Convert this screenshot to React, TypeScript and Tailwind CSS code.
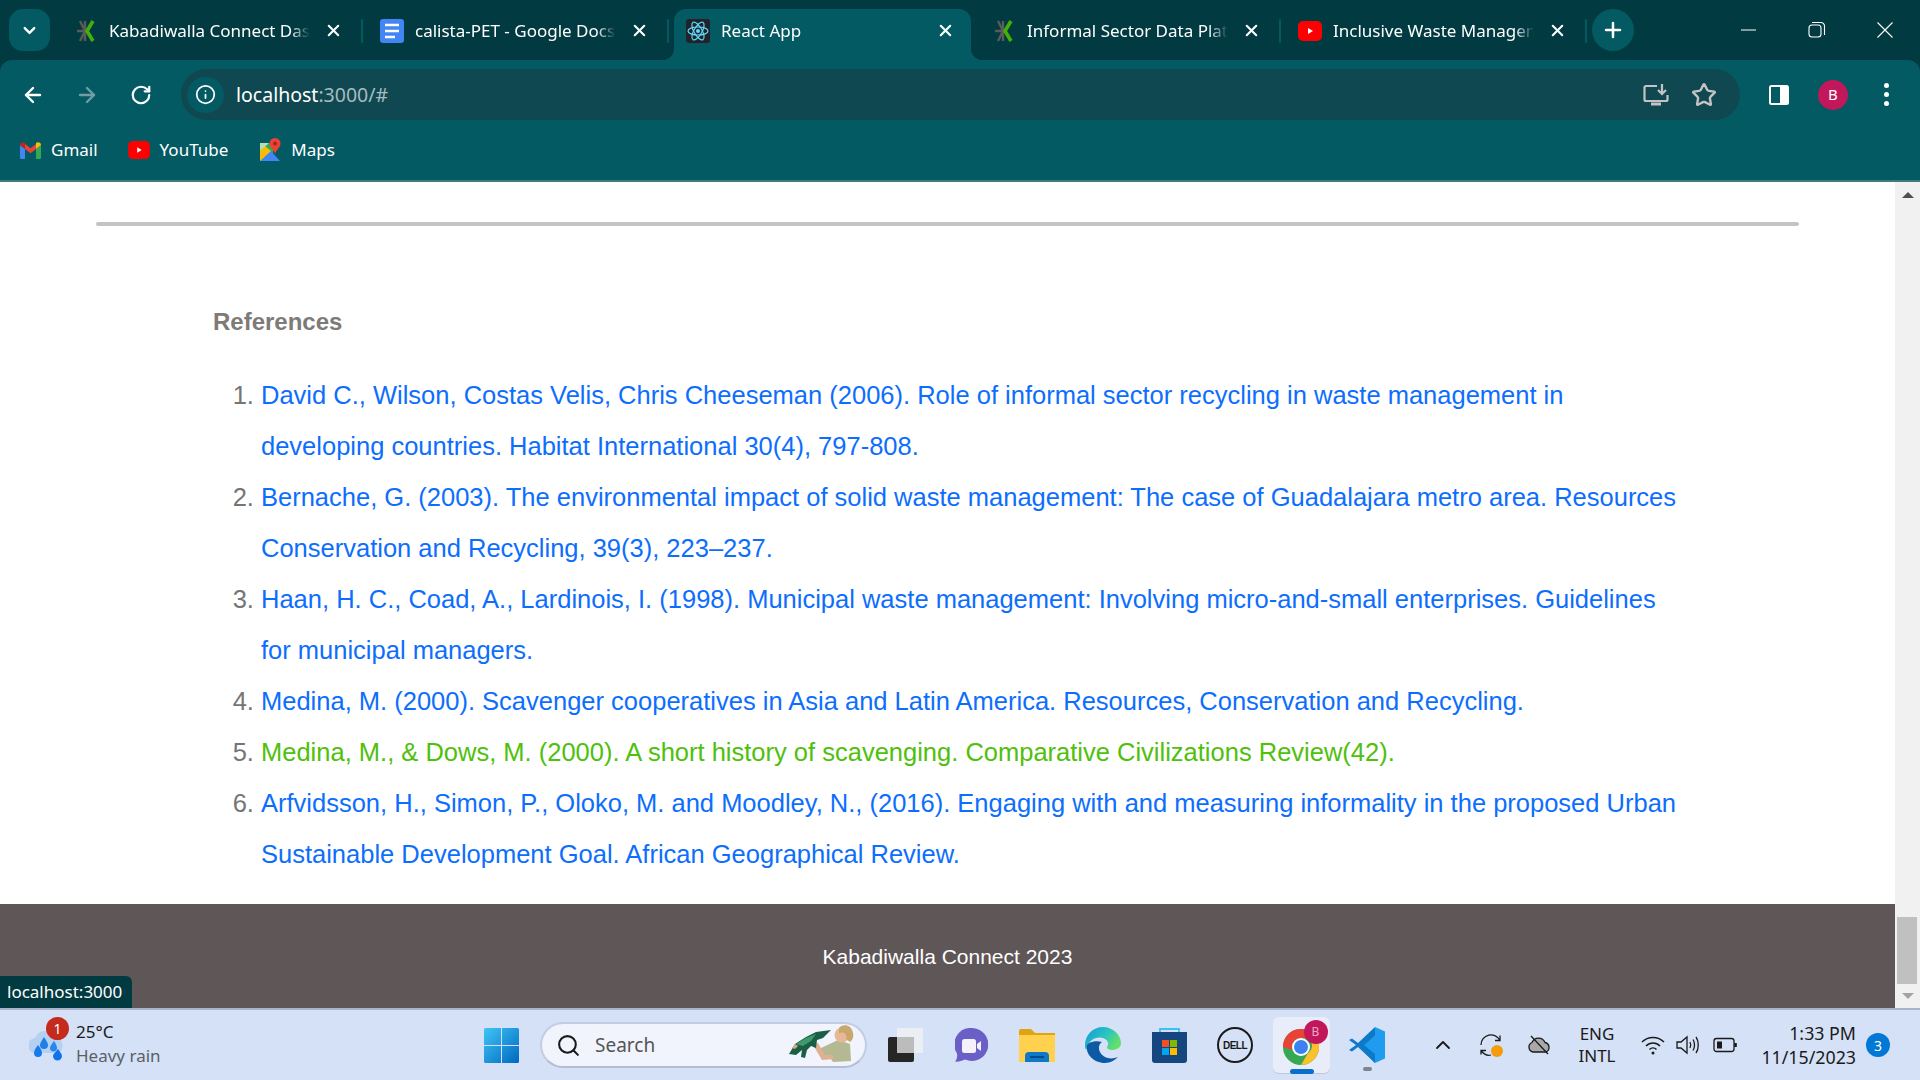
import React from "react";
import {
  ArrowLeft,
  ArrowRight,
  ChevronDown,
  ChevronUp,
  Info,
  Plus,
  RotateCw,
  Search,
  Star,
  X,
} from "lucide-react";

const references = [
  {
    text: "David C., Wilson, Costas Velis, Chris Cheeseman (2006). Role of informal sector recycling in waste management in developing countries. Habitat International 30(4), 797-808.",
    color: "text-[#0d6efd]",
  },
  {
    text: "Bernache, G. (2003). The environmental impact of solid waste management: The case of Guadalajara metro area. Resources Conservation and Recycling, 39(3), 223–237.",
    color: "text-[#0d6efd]",
  },
  {
    text: "Haan, H. C., Coad, A., Lardinois, I. (1998). Municipal waste management: Involving micro-and-small enterprises. Guidelines for municipal managers.",
    color: "text-[#0d6efd]",
  },
  {
    text: "Medina, M. (2000). Scavenger cooperatives in Asia and Latin America. Resources, Conservation and Recycling.",
    color: "text-[#0d6efd]",
  },
  {
    text: "Medina, M., & Dows, M. (2000). A short history of scavenging. Comparative Civilizations Review(42).",
    color: "text-[#4fc00c]",
  },
  {
    text: "Arfvidsson, H., Simon, P., Oloko, M. and Moodley, N., (2016). Engaging with and measuring informality in the proposed Urban Sustainable Development Goal. African Geographical Review.",
    color: "text-[#0d6efd]",
  },
];

function KabadiLogo() {
  return (
    <svg width="20" height="22" viewBox="0 0 20 22">
      <path d="M4 1l5 10-5 10M9 1v20M1 11h7" stroke="#5a5a5a" strokeWidth="2.4" fill="none" />
      <path d="M17 1l-6 10 6 10" stroke="#43b00a" strokeWidth="3.6" fill="none" />
    </svg>
  );
}

function DocsIcon() {
  return (
    <svg width="24" height="24" viewBox="0 0 24 24">
      <rect width="24" height="24" rx="3" fill="#4285f4" />
      <path d="M5 6h14M5 12h14M5 18h10" stroke="#fff" strokeWidth="2.6" />
    </svg>
  );
}

function ReactIcon() {
  return (
    <svg width="24" height="24" viewBox="0 0 24 24">
      <rect width="24" height="24" rx="3" fill="#20232a" />
      <g fill="none" stroke="#61dafb" strokeWidth="1.2">
        <ellipse cx="12" cy="12" rx="10" ry="4" />
        <ellipse cx="12" cy="12" rx="10" ry="4" transform="rotate(60 12 12)" />
        <ellipse cx="12" cy="12" rx="10" ry="4" transform="rotate(120 12 12)" />
      </g>
      <circle cx="12" cy="12" r="2" fill="#61dafb" />
    </svg>
  );
}

function YouTubeIcon({ w = 24, h = 20 }: { w?: number; h?: number }) {
  return (
    <svg width={w} height={h} viewBox="0 0 24 20">
      <rect width="24" height="20" y="0" rx="5" fill="#f00" />
      <path d="M10 7l5 3-5 3z" fill="#fff" />
    </svg>
  );
}

function GmailIcon() {
  return (
    <svg width="21" height="17" viewBox="0 0 21 17">
      <path d="M0 3v12.500a1.500 1.500 0 0 0 1.500 1.500H5V7z" fill="#4285f4" />
      <path d="M16 7v10h3.500a1.500 1.500 0 0 0 1.500-1.500V3z" fill="#34a853" />
      <path d="M5 7v-5l5.500 4.200L16 2v5l-5.500 4.200z" fill="#ea4335" />
      <path d="M0 3c0-2.500 3-3.500 5-2v6z" fill="#c5221f" />
      <path d="M21 3c0-2.500-3-3.500-5-2v6z" fill="#fbbc04" />
    </svg>
  );
}

function MapsIcon() {
  return (
    <svg width="22" height="24" viewBox="0 0 22 24">
      <path d="M1 5h13v18H1z" fill="#34a853" />
      <path d="M1 23l10-11 10 11z" fill="#4285f4" />
      <path d="M1 23V13l5-5 6 5z" fill="#fbbc04" />
      <path d="M1 5h9L1 13z" fill="#b9dcb7" />
      <path d="M16 0a5.500 5.500 0 0 1 5.500 5.500C21.500 9.500 17 12 16 16c-1-4-5.500-6.500-5.500-10.500A5.500 5.500 0 0 1 16 0z" fill="#ea4335" />
      <circle cx="16" cy="5.500" r="2" fill="#a52714" />
    </svg>
  );
}

function Tab({
  icon,
  title,
  active,
  last,
}: {
  icon: React.ReactNode;
  title: string;
  active?: boolean;
  last?: boolean;
}) {
  return (
    <div className="relative flex h-[51px] w-[306px] shrink-0 items-center pb-[8px]">
      {active && (
        <div className="absolute bottom-0 left-[5px] right-[4px] top-0 rounded-t-xl bg-[#035a62]">
          <div className="absolute bottom-0 left-[-12px] h-3 w-3 bg-[radial-gradient(circle_at_0_0,#023a42_12px,#035a62_12.500px)]" />
          <div className="absolute bottom-0 right-[-12px] h-3 w-3 bg-[radial-gradient(circle_at_100%_0,#023a42_12px,#035a62_12.500px)]" />
        </div>
      )}
      <div className="relative ml-[17px] flex h-6 w-6 items-center justify-center">{icon}</div>
      <span className="relative ml-[11px] w-[201px] overflow-hidden whitespace-nowrap text-[17px] leading-6 text-white [mask-image:linear-gradient(to_right,black_90%,transparent)]">
        {title}
      </span>
      <X className="relative ml-[14px] text-white" size={19} strokeWidth={2.6} />
      {!last && !active && <div className="absolute right-0 top-[10px] h-6 w-[2px] rounded bg-[#035a62]" />}
    </div>
  );
}

function TabStrip() {
  return (
    <div className="flex h-[60px] items-start bg-[#023a42] pl-[9px] pt-[9px]">
      <div className="flex h-[42px] w-[41px] shrink-0 items-center justify-center rounded-[14px] bg-[#035a62]">
        <ChevronDown className="text-white" size={19} strokeWidth={3} />
      </div>
      <div className="ml-[7px] flex">
        <Tab icon={<KabadiLogo />} title="Kabadiwalla Connect Dashboard" />
        <Tab icon={<DocsIcon />} title="calista-PET - Google Docs" />
        <Tab icon={<ReactIcon />} title="React App" active />
        <Tab icon={<KabadiLogo />} title="Informal Sector Data Platform" />
        <Tab icon={<YouTubeIcon />} title="Inclusive Waste Management" />
      </div>
      <div className="ml-[5px] flex h-[42px] w-[42px] shrink-0 items-center justify-center rounded-full bg-[#035a62]">
        <Plus className="text-white" size={24} strokeWidth={2.5} />
      </div>
      <div className="ml-[104px] flex h-[42px] items-center gap-[46px]">
        <svg width="22" height="22" viewBox="0 0 22 22">
          <path d="M3 11h15" stroke="#fff" strokeWidth="1" />
        </svg>
        <svg width="22" height="22" viewBox="0 0 22 22">
          <rect x="3" y="6" width="12" height="12" rx="3" fill="none" stroke="#fff" strokeWidth="1.1" />
          <path d="M6 3.500h9a3.500 3.500 0 0 1 3.500 3.500v9" fill="none" stroke="#fff" strokeWidth="1.1" />
        </svg>
        <svg width="22" height="22" viewBox="0 0 22 22">
          <path d="M3.500 3.500l15 15M18.500 3.500l-15 15" stroke="#fff" strokeWidth="1.1" />
        </svg>
      </div>
    </div>
  );
}

function Toolbar() {
  return (
    <div className="h-[120px] rounded-t-xl bg-[#035a62]">
      <div className="flex h-[60px] items-end">
        <div className="flex h-[51px] w-[181px] shrink-0 items-center">
          <ArrowLeft className="ml-[21px] text-white" size={24} strokeWidth={2.4} />
          <ArrowRight className="ml-[30px] text-[#6f9ea3]" size={24} strokeWidth={2.4} />
          <RotateCw className="ml-[31px] text-white" size={22} strokeWidth={2.4} />
        </div>
        <div className="flex h-[51px] w-[1559px] items-center rounded-full bg-[#0f4850] pl-[6px]">
          <div className="flex h-[36px] w-[37px] items-center justify-center rounded-full bg-[#035a62]">
            <Info className="text-white" size={21} strokeWidth={2} />
          </div>
          <span className="ml-3 text-[19.500px] leading-6 text-white">
            localhost<span className="text-[#a5bcc0]">:3000/#</span>
          </span>
          <div className="ml-auto mr-[23px] flex items-center gap-[22px]">
            <svg width="26" height="24" viewBox="0 0 26 24" fill="none" stroke="#c4c4c4" strokeWidth="2.2">
              <path d="M14 3H3a1.500 1.500 0 0 0-1.500 1.500v12A1.500 1.500 0 0 0 3 18h20a1.500 1.500 0 0 0 1.500-1.500V12" />
              <path d="M19 1v9M15 7l4 4 4-4" />
              <path d="M8 21h10" strokeWidth="3" />
            </svg>
            <Star className="text-[#c4c4c4]" size={26} strokeWidth={2.2} />
          </div>
        </div>
        <div className="flex h-[51px] flex-1 items-center">
          <svg className="ml-[28px]" width="22" height="22" viewBox="0 0 22 22">
            <rect x="1" y="1" width="20" height="20" rx="2.500" fill="#fff" />
            <rect x="3" y="3" width="9" height="16" fill="#035a62" />
          </svg>
          <div className="ml-[28px] flex h-[30px] w-[30px] items-center justify-center rounded-full bg-[#c2185b] font-['Noto_Sans',sans-serif] text-[15px] text-white">
            B
          </div>
          <div className="ml-[36px] flex flex-col gap-[4px]">
            <div className="h-[5px] w-[5px] rounded-full bg-white" />
            <div className="h-[5px] w-[5px] rounded-full bg-white" />
            <div className="h-[5px] w-[5px] rounded-full bg-white" />
          </div>
        </div>
      </div>
      <div className="flex h-[60px] items-center pl-[20px] text-[17px] text-white">
        <GmailIcon />
        <span className="ml-[10px]">Gmail</span>
        <div className="ml-[30px]">
          <YouTubeIcon w={22} h={18} />
        </div>
        <span className="ml-[10px]">YouTube</span>
        <div className="ml-[31px] h-6">
          <MapsIcon />
        </div>
        <span className="ml-[10px]">Maps</span>
      </div>
    </div>
  );
}

function Scrollbar() {
  return (
    <div className="flex w-[25px] shrink-0 flex-col bg-[#f1f1f1]">
      <div className="flex h-[26px] items-center justify-center">
        <div className="h-0 w-0 border-x-[6px] border-b-[6px] border-x-transparent border-b-[#505050]" />
      </div>
      <div className="flex flex-1 flex-col justify-end">
        <div className="ml-[2px] h-[67px] w-[20px] bg-[#c0c0c0]" />
      </div>
      <div className="flex h-[24px] items-center justify-center">
        <div className="h-0 w-0 border-x-[6px] border-t-[6px] border-x-transparent border-t-[#a3a3a3]" />
      </div>
    </div>
  );
}

function Page() {
  return (
    <div className="relative flex h-[826px]">
      <div className="flex flex-1 flex-col bg-white font-['Liberation_Sans',Arial,sans-serif]">
        <div className="flex-1 pt-[40px]">
          <div className="mx-[96px] h-1 rounded-sm bg-[#c4c4c4]" />
          <div className="px-[213px] pt-[82px]">
            <h2 className="text-[24px] font-bold leading-[28px] text-[#7d7a78]">References</h2>
            <ol className="mt-[34px] list-decimal pl-[48px] text-[#757575]">
              {references.map((item) => (
                <li key={item.text} className="text-[25.500px] leading-[51px]">
                  <span className={item.color}>{item.text}</span>
                </li>
              ))}
            </ol>
          </div>
        </div>
        <footer className="h-[104px] bg-[#5f5657] pt-[39px] text-center text-[21px] leading-7 text-white">
          Kabadiwalla Connect 2023
        </footer>
      </div>
      <Scrollbar />
      <div className="absolute bottom-0 left-0 flex h-8 w-[132px] items-center rounded-tr-md bg-[#023a42] pl-[7px] font-['Noto_Sans',sans-serif] text-[17px] text-white">
        localhost:3000
      </div>
    </div>
  );
}

function WeatherIcon() {
  return (
    <svg width="37" height="32" viewBox="0 0 37 32">
      <path d="M7 24a7.500 7.500 0 0 1-1-15 11 11 0 0 1 20-1 8.500 8.500 0 0 1 3 16z" fill="#b6d0f2" />
      <path d="M15 8c2 3 4 6 4 8a4 4 0 0 1-8 0c0-2 2-5 4-8z" fill="#1f7fe8" />
      <path d="M9 16c2 3 4 5 4 8a4 4 0 0 1-8 0c0-3 2-5 4-8z" fill="#1679ec" />
      <path d="M25 12c2 3 3 5 3 7a3.500 3.500 0 0 1-7 0c0-2 2-4 4-7z" fill="#2a86e8" />
      <path d="M29 20c2 3 4 5 4 7a4.500 4.500 0 0 1-9 0c0-2 3-4 5-7z" fill="#0f74ea" />
    </svg>
  );
}

function SearchDoodle() {
  return (
    <svg width="68" height="40" viewBox="23 12 68 40" className="shrink-0">
      {/* man */}
      <path d="M55 35l17-8 12 4 1 17-18 1-4-6-8 3z" fill="#b4b893" />
      <path d="M47 32l9 15 12-1-1-4-8 0-7-12z" fill="#e0b090" />
      <circle cx="76" cy="22" r="7.500" fill="#e6b896" />
      <path d="M73 15c4-5 13-3 14 5 1 4-1 8-3 9l-4-3c2-4-2-8-7-6z" fill="#c9a86c" />
      {/* gator */}
      <path d="M23 41l6-10 11-7 10-5 15-2-8 8-6 2-1 8-5-2-4 4-2 8-4-1 1-7-6 5z" fill="#1a5f45" />
      <path d="M30 31l10-6 10-4-5 7-8 5z" fill="#3f9a6b" />
      <path d="M29 31l-3 4 3 1 3-3z" fill="#d8a888" />
    </svg>
  );
}

function TaskViewIcon() {
  return (
    <svg width="35" height="34" viewBox="0 0 35 34">
      <rect x="0" y="9" width="26" height="25" rx="2" fill="#262626" />
      <rect x="9" y="0" width="26" height="25" rx="1" fill="#f0f1f3" fillOpacity="0.8" />
      <rect x="9" y="9" width="17" height="16" fill="#bcbcbc" />
    </svg>
  );
}

function ChatIcon() {
  return (
    <svg width="33" height="34" viewBox="0 0 33 34">
      <path d="M17 0a16.500 16.500 0 1 1-7 31.500C7 33 3 34 0 33.500c2-2 2.500-5 2-8A16.500 16.500 0 0 1 17 0z" fill="#6a5fc6" />
      <rect x="7" y="11" width="14" height="14" rx="2.500" fill="#f4f1fb" />
      <path d="M22 16l4-3v10l-4-3z" fill="#f4f1fb" />
    </svg>
  );
}

function FolderIcon() {
  return (
    <svg width="36" height="33" viewBox="0 0 36 33">
      <path d="M0 2a2 2 0 0 1 2-2h10l4 4h20v29H0z" fill="#e0a50e" />
      <path d="M0 6h36v27H0z" fill="#ffd14f" />
      <path d="M6 33v-6a4 4 0 0 1 4-4h16a4 4 0 0 1 4 4v6z" fill="#0f78c9" />
      <path d="M11 28h14" stroke="#063f7a" strokeWidth="1.600" />
    </svg>
  );
}

function EdgeIcon() {
  return (
    <svg width="36" height="36" viewBox="0 0 36 36">
      <defs>
        <linearGradient id="edgeTop" x1="0" y1="0" x2="1" y2="0.500">
          <stop offset="0" stopColor="#1099d8" />
          <stop offset="0.600" stopColor="#2ac4c0" />
          <stop offset="1" stopColor="#62e06a" />
        </linearGradient>
      </defs>
      <path d="M18 0c10 0 18 8 18 16 0 5-5 7-9 7-3 0-5-1-5-3 2-2 2-7-4-9-7-2-14 2-16 10-1 3-2 1-2-3C0 8 8 0 18 0z" fill="url(#edgeTop)" />
      <path d="M2 18c-2 9 7 18 18 18 5 0 10-3 13-6-7 3-15 1-18-5-2-4-1-8 2-10-6-2-13 0-15 3z" fill="#0c59a4" />
    </svg>
  );
}

function StoreIcon() {
  return (
    <svg width="35" height="36" viewBox="0 0 35 36">
      <path d="M8 7V2h19v5" fill="none" stroke="#37c3f4" strokeWidth="1.800" />
      <path d="M0 5h35v28a3 3 0 0 1-3 3H3a3 3 0 0 1-3-3z" fill="#15467f" />
      <rect x="10" y="13" width="7" height="7" fill="#f25022" />
      <rect x="18" y="13" width="7" height="7" fill="#7fba00" />
      <rect x="10" y="21" width="7" height="7" fill="#00a4ef" />
      <rect x="18" y="21" width="7" height="7" fill="#ffb900" />
    </svg>
  );
}

function DellIcon() {
  return (
    <div className="flex h-9 w-9 items-center justify-center rounded-full border-2 border-[#1a1a1a] font-['Liberation_Sans',sans-serif] text-[10px] font-bold tracking-[-0.5px] text-[#1a1a1a]">
      DELL
    </div>
  );
}

function ChromeIcon() {
  return (
    <div className="relative flex h-[56px] w-[57px] items-center justify-center rounded-md bg-[#e8edf9] shadow-[0_1px_0_#bfc9de]">
      <svg width="36" height="36" viewBox="0 0 36 36" className="mt-[3px]">
        <circle cx="18" cy="18" r="18" fill="#34a853" />
        <path d="M18 0a18 18 0 0 1 15.600 9H18a9 9 0 0 0-8.500 6L3.500 7A18 18 0 0 1 18 0z" fill="#ea4335" />
        <path d="M3.500 7l6 8a9 9 0 0 0 0 6L0 18A18 18 0 0 1 3.500 7z" fill="#ea4335" />
        <path d="M33.600 9A18 18 0 0 1 18 36l7-12a9 9 0 0 0 0-15z" fill="#fbc02d" />
        <circle cx="18" cy="18" r="9" fill="#fff" />
        <circle cx="18" cy="18" r="7" fill="#3b82f0" />
      </svg>
      <div className="absolute right-[2px] top-[3px] flex h-6 w-6 items-center justify-center rounded-full bg-[#c2185b] font-['Noto_Sans',sans-serif] text-[12px] text-[#f0a8c4]">
        B
      </div>
      <div className="absolute bottom-[-1px] left-[17px] h-[5px] w-[24px] rounded-full bg-[#0b6fc9]" />
    </div>
  );
}

function VSCodeIcon() {
  return (
    <div className="relative flex items-center justify-center">
      <svg width="36" height="36" viewBox="0 0 36 36">
        <path d="M26 0l10 4.500v27L26 36 11 20 26 9z" fill="#1f9cf0" />
        <path d="M26 0L9 16 3 11.500 0 13l7 5-7 5 3 1.500L9 20l17 16V27L15 18 26 9z" fill="#0c7ac9" />
      </svg>
      <div className="absolute bottom-[-8px] h-[4px] w-[9px] rounded-full bg-[#7d8593]" />
    </div>
  );
}

function TaskSlot({ children }: { children: React.ReactNode }) {
  return <div className="flex h-full w-[66px] shrink-0 items-center justify-center">{children}</div>;
}

function Tray() {
  return (
    <div className="flex h-full items-center text-[#1a1a1a]">
      <ChevronUp className="ml-[31px]" size={24} strokeWidth={1.800} />
      <svg className="ml-6" width="24" height="24" viewBox="0 0 24 24" fill="none" stroke="#1a1a1a" strokeWidth="1.300">
        <path d="M2 12A10 10 0 0 1 21 7.500M21 2.500v5h-5" />
        <path d="M2 21.500v-4h5M2 17.500c3 4 7 5.500 10 4.500" />
        <circle cx="18" cy="18" r="6" fill="#f59c0a" stroke="none" />
      </svg>
      <svg className="ml-6" width="24" height="24" viewBox="0 0 24 24">
        <path d="M6 19a5 5 0 0 1-1-9.500 7 7 0 0 1 13 0A5 5 0 0 1 19 19z" fill="#a9a9a9" stroke="#1a1a1a" strokeWidth="1.300" />
        <path d="M4 3l17 18" stroke="#1a1a1a" strokeWidth="1.300" />
      </svg>
      <div className="ml-4 w-[60px] text-center text-[17px] leading-[22px]">
        <div>ENG</div>
        <div>INTL</div>
      </div>
      <svg className="ml-[14px]" width="24" height="24" viewBox="0 0 24 24" fill="none" stroke="#1a1a1a" strokeWidth="1.500">
        <path d="M1 9c6-6 16-6 22 0M5 13c4-4 10-4 14 0M8.500 16.500c2-2 5-2 7 0" />
        <circle cx="12" cy="20" r="1.500" fill="#1a1a1a" stroke="none" />
      </svg>
      <svg className="ml-[11px]" width="24" height="24" viewBox="0 0 24 24" fill="none" stroke="#1a1a1a" strokeWidth="1.300">
        <path d="M1 9v6h4l6 5V4L5 9z" />
        <path d="M14 9c1 2 1 4 0 6M17 6.500c2 3 2 8 0 11M20 4c3 4 3 12 0 16" />
      </svg>
      <svg className="ml-[13px]" width="24" height="24" viewBox="0 0 24 24" fill="none" stroke="#1a1a1a" strokeWidth="1.300">
        <rect x="1" y="5.500" width="20" height="13" rx="2.500" />
        <rect x="4" y="8.500" width="5" height="7" fill="#1a1a1a" stroke="none" />
        <path d="M22.500 10v4" strokeWidth="2.600" />
      </svg>
      <div className="ml-[1px] w-[118px] text-right text-[17.800px] leading-[24px]">
        <div>1:33 PM</div>
        <div>11/15/2023</div>
      </div>
      <div className="ml-[10px] flex h-6 w-6 items-center justify-center rounded-full bg-[#0078d4] text-[14px] text-white">
        3
      </div>
    </div>
  );
}

function Taskbar() {
  return (
    <div className="flex h-[72px] items-center border-t-2 border-[#a9b3cc] bg-[#d5e1f6] font-['Noto_Sans',sans-serif]">
      <div className="flex w-[484px] shrink-0 items-center pl-[29px]">
        <div className="relative h-8 w-[37px]">
          <WeatherIcon />
          <div className="absolute left-[17px] top-[-12px] flex h-[23px] w-[23px] items-center justify-center rounded-full bg-[#c42b1c] text-[14px] text-white">
            1
          </div>
        </div>
        <div className="ml-[10px] pb-[2px] leading-6">
          <div className="text-[17px] text-[#1a1a1a]">25°C</div>
          <div className="text-[17px] text-[#5a5f68]">Heavy rain</div>
        </div>
      </div>
      <svg width="35" height="35" viewBox="0 0 35 35" className="shrink-0">
        <defs>
          <linearGradient id="win" x1="0" y1="0" x2="1" y2="1">
            <stop offset="0" stopColor="#3fc6f6" />
            <stop offset="1" stopColor="#0067c0" />
          </linearGradient>
        </defs>
        <path d="M0 1.500A1.500 1.500 0 0 1 1.500 0H17v17H0zM18 0h15.500A1.500 1.500 0 0 1 35 1.500V17H18zM0 18h17v17H1.500A1.500 1.500 0 0 1 0 33.500zM18 18h17v15.500a1.500 1.500 0 0 1-1.500 1.500H18z" fill="url(#win)" />
      </svg>
      <div className="ml-[21px] flex h-[46px] w-[327px] shrink-0 items-center rounded-full border-2 border-[#c3cde2] border-b-[#b4bdd2] bg-[#f1f4fd] pl-[14px] pr-[8px]">
        <Search className="text-[#1a1a1a]" size={25} strokeWidth={2} />
        <span className="ml-[14px] text-[19px] text-[#555]">Search</span>
        <div className="ml-auto">
          <SearchDoodle />
        </div>
      </div>
      <div className="ml-[5px] flex h-full">
        <TaskSlot>
          <TaskViewIcon />
        </TaskSlot>
        <TaskSlot>
          <ChatIcon />
        </TaskSlot>
        <TaskSlot>
          <FolderIcon />
        </TaskSlot>
        <TaskSlot>
          <EdgeIcon />
        </TaskSlot>
        <TaskSlot>
          <StoreIcon />
        </TaskSlot>
        <TaskSlot>
          <DellIcon />
        </TaskSlot>
        <TaskSlot>
          <ChromeIcon />
        </TaskSlot>
        <TaskSlot>
          <VSCodeIcon />
        </TaskSlot>
      </div>
      <Tray />
    </div>
  );
}

export default function App() {
  return (
    <div className="h-[1080px] w-[1920px] overflow-hidden bg-[#023a42] font-['Noto_Sans',sans-serif]">
      <TabStrip />
      <Toolbar />
      <div className="h-[2px] bg-[#3f7b83]" />
      <Page />
      <Taskbar />
    </div>
  );
}
